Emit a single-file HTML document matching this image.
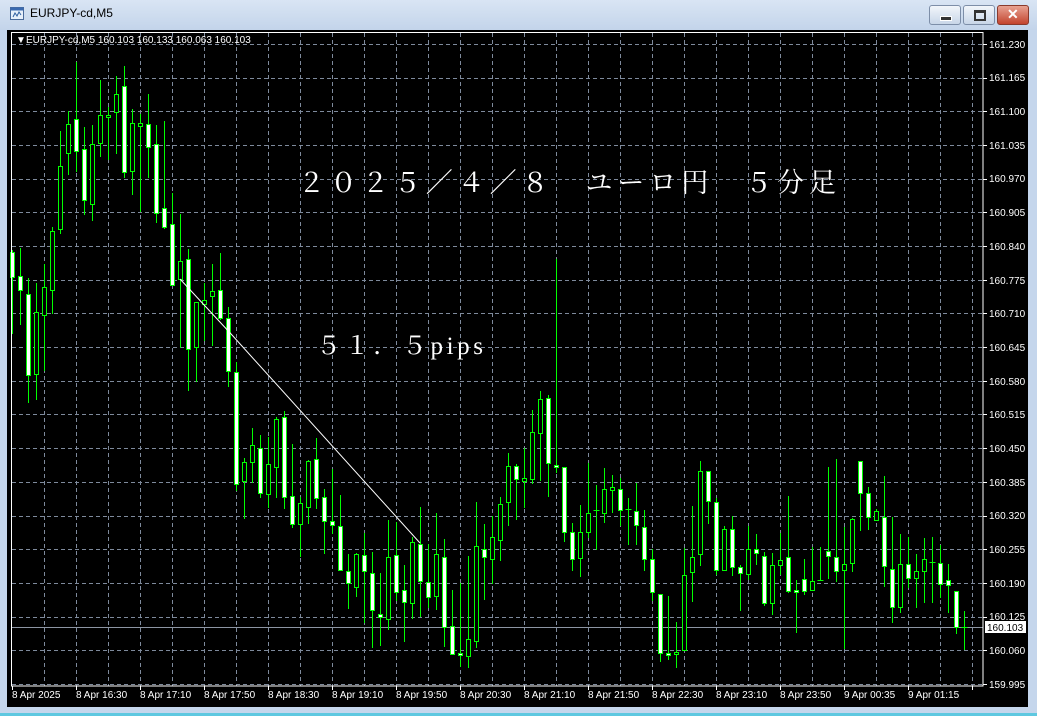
<!DOCTYPE html>
<html><head><meta charset="utf-8"><style>
html,body{margin:0;padding:0;width:1037px;height:716px;overflow:hidden;background:#c5d6ec;font-family:"Liberation Sans",sans-serif}
#title{position:absolute;left:0;top:0;width:1037px;height:30px;background:linear-gradient(#d9e5f4,#c3d4ea)}
#ttl{position:absolute;left:30px;top:6px;font-size:12px;color:#000}
.btn{position:absolute;top:5px;width:30px;height:18px;border:1px solid #7d8ea8;border-radius:3px;background:linear-gradient(#f2f6fb,#c8d6e8)}
#cls{background:linear-gradient(#e8a393,#c3442e);border-color:#8a3a2c}
#chart{position:absolute;left:0;top:0}
#foot{position:absolute;left:0;top:713px;width:1037px;height:3px;background:#5ec8e0}
</style></head><body>
<div id="title">
<svg style="position:absolute;left:10px;top:7px" width="15" height="14"><rect x="0.5" y="0.5" width="13" height="12" fill="#e8f0fa" stroke="#4a6a9a"/><rect x="0.5" y="0.5" width="13" height="3" fill="#3a6ab0"/><path d="M3 10 L5 6 L7 9 L9 5 L11 8" stroke="#3060a0" fill="none"/></svg>
<div id="ttl">EURJPY-cd,M5</div>
<div class="btn" style="left:929px"><div style="position:absolute;left:10px;top:10px;width:10px;height:3px;background:#333;border:1px solid #fff"></div></div>
<div class="btn" style="left:963px"><div style="position:absolute;left:10px;top:4px;width:8px;height:6px;border:2px solid #333;border-top-width:3px"></div></div>
<div class="btn" id="cls" style="left:997px;width:30px"><div style="position:absolute;left:9px;top:0px;color:#fff;font-weight:bold;font-size:14px">✕</div></div>
</div>
<div id="foot"></div>
<svg id="chart" width="1037" height="716" xmlns="http://www.w3.org/2000/svg">
<rect x="7" y="30" width="1021" height="677" fill="#000"/>
<g id="grid" stroke="#7e8a9c" stroke-width="1" stroke-dasharray="4,3"></g>
<line x1="11" y1="627.5" x2="983" y2="627.5" stroke="#8c95a3"/>
<g id="candles"></g>
<path d="M180 279 L232 335 L420 543" stroke="#fff" stroke-width="1" fill="none"/>
<rect x="11.5" y="32.5" width="971.5" height="653.5" fill="none" stroke="#fff"/>
<g id="ticks" stroke="#fff"></g>
<g fill="#fff" font-family="Liberation Sans, sans-serif" font-size="10">
<text x="16" y="43">▼</text><text x="26" y="43">EURJPY-cd,M5  160.103 160.133 160.063 160.103</text>
<text x="989" y="48">161.230</text><text x="989" y="81">161.165</text><text x="989" y="115">161.100</text>
<text x="989" y="149">161.035</text><text x="989" y="182">160.970</text><text x="989" y="216">160.905</text>
<text x="989" y="250">160.840</text><text x="989" y="284">160.775</text><text x="989" y="317">160.710</text>
<text x="989" y="351">160.645</text><text x="989" y="385">160.580</text><text x="989" y="418">160.515</text>
<text x="989" y="452">160.450</text><text x="989" y="486">160.385</text><text x="989" y="519">160.320</text>
<text x="989" y="553">160.255</text><text x="989" y="587">160.190</text><text x="989" y="620">160.125</text>
<text x="989" y="654">160.060</text><text x="989" y="688">159.995</text>
<rect x="985" y="621" width="41" height="12" fill="#fff"/>
<text x="987" y="631" fill="#000">160.103</text>
<text x="12" y="698">8 Apr 2025</text><text x="76" y="698">8 Apr 16:30</text><text x="140" y="698">8 Apr 17:10</text>
<text x="204" y="698">8 Apr 17:50</text><text x="268" y="698">8 Apr 18:30</text><text x="332" y="698">8 Apr 19:10</text>
<text x="396" y="698">8 Apr 19:50</text><text x="460" y="698">8 Apr 20:30</text><text x="524" y="698">8 Apr 21:10</text>
<text x="588" y="698">8 Apr 21:50</text><text x="652" y="698">8 Apr 22:30</text><text x="716" y="698">8 Apr 23:10</text>
<text x="780" y="698">8 Apr 23:50</text><text x="844" y="698">9 Apr 00:35</text><text x="908" y="698">9 Apr 01:15</text>
</g>
<g fill="#fff" font-family="Liberation Serif, Noto Serif CJK SC, serif">
<text x="298" y="192" font-size="27" textLength="538" lengthAdjust="spacing">２０２５／４／８　ユーロ円　５分足</text>
<text x="316" y="354" font-size="25" textLength="167" lengthAdjust="spacing">５１．５pips</text>
</g>
</svg>
<script>
var ns="http://www.w3.org/2000/svg";
function el(t,a,p){var e=document.createElementNS(ns,t);for(var k in a)e.setAttribute(k,a[k]);p.appendChild(e);return e;}
var g=document.getElementById('grid');
for(var x=44;x<983;x+=32)el('line',{x1:x+.5,y1:33,x2:x+.5,y2:686},g);
for(var i=0;i<20;i++){var y=Math.round(44+33.68*i)+.5;el('line',{x1:12,y1:y,x2:983,y2:y},g);}
var tk=document.getElementById('ticks');
for(var i=0;i<20;i++){var y=Math.round(44+33.68*i)+.5;el('line',{x1:983,y1:y,x2:987,y2:y},tk);}
for(var x=12;x<983;x+=64)el('line',{x1:x+.5,y1:686,x2:x+.5,y2:690},tk);
var d=[[250,252,277,333,1],[248,276,290,324,1],[278,294,375,402,1],[283,312,374,399,0],[264,287,315,370,0],[227,231,290,313,0],[131,166,229,233,0],[111,124,153,174,0],[62,119,151,171,1],[127,149,200,214,1],[125,144,204,220,0],[80,115,143,156,0],[107,115,117,159,0],[76,94,112,153,0],[66,86,172,177,1],[109,123,171,194,0],[114,123,126,211,0],[94,124,147,177,1],[125,144,213,222,1],[121,208,227,228,1],[193,224,285,285,1],[214,261,279,347,0],[249,259,349,390,1],[302,302,347,381,0],[283,300,304,340,0],[264,291,296,345,0],[253,290,318,319,1],[307,318,371,386,1],[362,372,484,490,1],[458,462,481,518,0],[428,445,462,482,0],
[435,448,493,497,1],[437,464,494,507,0],[417,419,467,497,0],[411,417,497,508,1],[444,496,524,527,1],[497,503,524,556,0],[460,461,507,523,0],[438,459,498,508,1],[489,497,521,553,1],[469,521,525,533,1],[495,526,570,570,1],[554,571,583,608,1],[553,554,587,596,0],[533,555,571,622,1],[552,573,610,647,1],[573,614,617,645,1],[520,557,619,629,0],[522,555,592,600,1],[565,590,602,641,1],[537,542,603,618,0],[507,544,581,616,1],[544,582,597,607,1],[513,554,596,609,0],[539,557,627,646,1],[590,626,654,654,1],[583,653,655,666,1],[556,639,656,667,0],[502,546,641,647,0],
[524,549,557,599,1],[516,537,559,583,0],[497,504,540,560,0],[453,466,502,525,0],[464,466,479,519,1],[448,478,481,507,0],[410,432,479,483,0],[391,399,433,480,0],[395,398,463,496,1],[259,465,467,472,1],[467,467,532,541,1],[523,532,559,570,1],[505,532,558,576,0],[463,513,532,537,0],[485,510,511,549,2],[468,489,513,522,0],[475,487,490,512,0],[478,489,510,525,1],[498,509,510,544,2],[483,511,525,544,1],[510,527,559,570,1],[549,559,592,600,1],[594,594,653,661,1],[596,653,655,659,1],[622,652,654,667,0],[548,575,650,650,0],[506,557,572,601,0],[461,471,554,565,0],[471,471,501,523,1],[498,502,570,574,1],
[526,529,570,570,0],[516,529,567,575,1],[565,567,573,610,1],[526,549,574,579,0],[534,549,553,564,1],[552,556,603,605,1],[553,565,603,614,0],[533,560,565,574,0],[496,557,591,592,1],[580,590,592,632,1],[559,579,591,594,1],[547,581,590,590,0],[547,580,580,580,2],[467,551,556,578,1],[459,557,571,581,1],[527,564,570,648,0],[518,519,563,571,0],[461,461,493,530,1],[487,493,517,529,1],[509,511,520,520,0],[476,517,566,586,1],[517,569,607,622,1],[534,564,607,612,0],[537,564,578,587,1],[554,571,578,607,0],[538,559,571,602,0],[537,562,563,602,2],[545,563,584,597,1],[564,580,585,612,1],[591,591,627,633,1],[611,627,627,649,2]];
var c=document.getElementById('candles');
for(var k=0;k<d.length;k++){var a=d[k],cx=12.5+8*k;
el('line',{x1:cx,y1:a[0],x2:cx,y2:a[3]+1,stroke:'#00ff00'},c);
if(a[4]==2){el('line',{x1:cx-3,y1:a[1]+.5,x2:cx+3,y2:a[1]+.5,stroke:'#00ff00'},c);}
else{var h=Math.max(a[2]-a[1],2);el('rect',{x:cx-2,y:a[1]+.5,width:4,height:h,fill:a[4]?'#fff':'#000',stroke:'#00ff00'},c);}
}
</script>
</body></html>
